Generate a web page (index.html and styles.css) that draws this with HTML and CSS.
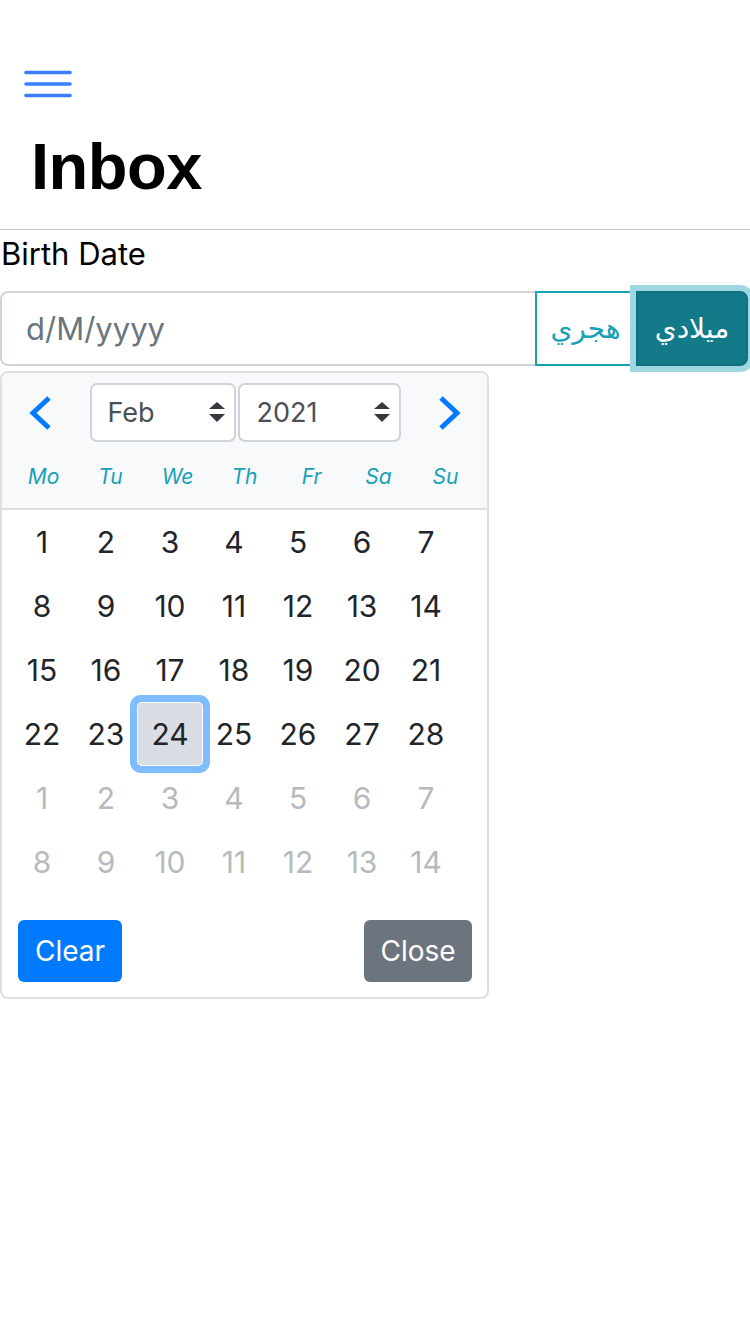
FILE: index.html
```html
<!DOCTYPE html>
<html>
<head>
<meta charset="utf-8">
<link rel="stylesheet" href="styles.css">
</head>
<body>
<div class="toolbar">
  <svg class="menu" width="50" height="30" viewBox="0 0 50 30">
    <line x1="2" y1="3.5" x2="46" y2="3.5" />
    <line x1="2" y1="15" x2="46" y2="15" />
    <line x1="2" y1="26.5" x2="46" y2="26.5" />
  </svg>
</div>
<div class="titlebar"><h1 class="title">Inbox</h1></div>
<div class="content">
  <label class="label">Birth Date</label>
  <div class="input-group">
    <div class="input"><span class="placeholder">d/M/yyyy</span></div>
    <div class="btn-hijri" dir="rtl">هجري</div>
    <div class="btn-miladi" dir="rtl">ميلادي</div>
  </div>
  <div class="picker">
    <div class="dp-header">
      <div class="nav">
        <div class="arrow left">
          <svg width="26" height="34" viewBox="0 0 26 34"><polyline points="22,2 6,17 22,32" /></svg>
        </div>
        <div class="select month"><span>Feb</span>
          <svg width="16" height="22" viewBox="0 0 16 22"><polygon points="8,0 16,7 0,7" /><polygon points="0,12 16,12 8,20" /></svg>
        </div>
        <div class="select year"><span>2021</span>
          <svg width="16" height="22" viewBox="0 0 16 22"><polygon points="8,0 16,7 0,7" /><polygon points="0,12 16,12 8,20" /></svg>
        </div>
        <div class="arrow right">
          <svg width="26" height="34" viewBox="0 0 26 34"><polyline points="4,2 20,17 4,32" /></svg>
        </div>
      </div>
      <div class="weekdays">
        <div>Mo</div><div>Tu</div><div>We</div><div>Th</div><div>Fr</div><div>Sa</div><div>Su</div>
      </div>
    </div>
    <div class="days">
      <div class="week"><div class="day">1</div><div class="day">2</div><div class="day">3</div><div class="day">4</div><div class="day">5</div><div class="day">6</div><div class="day">7</div></div>
      <div class="week"><div class="day">8</div><div class="day">9</div><div class="day">10</div><div class="day">11</div><div class="day">12</div><div class="day">13</div><div class="day">14</div></div>
      <div class="week"><div class="day">15</div><div class="day">16</div><div class="day">17</div><div class="day">18</div><div class="day">19</div><div class="day">20</div><div class="day">21</div></div>
      <div class="week"><div class="day">22</div><div class="day">23</div><div class="day selected">24</div><div class="day">25</div><div class="day">26</div><div class="day">27</div><div class="day">28</div></div>
      <div class="week muted"><div class="day">1</div><div class="day">2</div><div class="day">3</div><div class="day">4</div><div class="day">5</div><div class="day">6</div><div class="day">7</div></div>
      <div class="week muted"><div class="day">8</div><div class="day">9</div><div class="day">10</div><div class="day">11</div><div class="day">12</div><div class="day">13</div><div class="day">14</div></div>
    </div>
    <div class="footer">
      <div class="btn btn-primary">Clear</div>
      <div class="btn btn-secondary">Close</div>
    </div>
  </div>
</div>
</body>
</html>
```

FILE: styles.css
```css
html, body {
  margin: 0;
  padding: 0;
  background: #fff;
}
body {
  font-family: Inter, "Liberation Sans", sans-serif;
  color: #212529;
  width: 750px;
  overflow: hidden;
}
.toolbar {
  height: 88px;
  padding-top: 40px;
  display: flex;
  align-items: center;
  padding-left: 24px;
}
.menu line {
  stroke: #3880ff;
  stroke-width: 3.6;
  stroke-linecap: round;
}
.titlebar {
  border-bottom: 1px solid #c8c7cc;
  box-sizing: border-box;
  height: 102px;
}
.title {
  margin: 0;
  padding: 5px 0 0 31px;
  font-family: "Liberation Sans", Arial, sans-serif;
  font-weight: 700;
  font-size: 65px;
  line-height: 68px;
  letter-spacing: -0.5px;
  color: #000;
}
.content {
  padding: 0 2px 0 0;
}
.label {
  display: block;
  font-size: 31px;
  line-height: 48px;
  margin-bottom: 13px;
  padding-left: 1px;
  color: #000;
}
.input-group {
  display: flex;
  height: 75px;
}
.input {
  flex: 1;
  border: 2px solid #ced4da;
  border-right: none;
  border-radius: 8px 0 0 8px;
  display: flex;
  align-items: center;
  padding-left: 24px;
}
.placeholder {
  font-size: 31px;
  color: #6c757d;
}
.btn-hijri, .btn-miladi {
  font-family: "DejaVu Sans", sans-serif;
  font-size: 28px;
  display: flex;
  align-items: center;
  justify-content: center;
  box-sizing: border-box;
}
.btn-hijri {
  width: 101px;
  border: 2px solid #17a2b8;
  color: #17a2b8;
  background: #fff;
}
.btn-miladi {
  width: 112px;
  background: #127a88;
  border: 2px solid #10707f;
  color: #fff;
  border-radius: 0 8px 8px 0;
  box-shadow: 0 0 0 6px #9fd8e0;
  position: relative;
}
.picker {
  margin-top: 5px;
  width: 489px;
  box-sizing: border-box;
  border: 2px solid #dfdfdf;
  border-radius: 8px;
}
.dp-header {
  background: #f8f9fa;
  border-bottom: 2px solid #dfdfdf;
  border-radius: 6px 6px 0 0;
  padding-top: 10px;
}
.nav {
  display: flex;
  height: 59px;
  align-items: center;
}
.arrow {
  flex: 1;
  display: flex;
  align-items: center;
  height: 59px;
}
.arrow.left { padding-left: 25px; }
.arrow.right { justify-content: flex-end; padding-right: 24px; }
.arrow polyline {
  fill: none;
  stroke: #007bff;
  stroke-width: 5;
  stroke-linecap: butt;
  stroke-linejoin: miter;
}
.select {
  height: 59px;
  box-sizing: border-box;
  border: 2px solid #ced4da;
  border-radius: 7px;
  background: #fff;
  display: flex;
  align-items: center;
  justify-content: space-between;
  padding: 0 9px 0 16px;
  font-size: 27px;
  color: #495057;
}
.select svg polygon { fill: #343a40; }
.select svg { margin-top: 1px; }
.month { width: 146px; }
.year { width: 163px; margin-left: 2px; padding-left: 17px; }
.weekdays {
  display: flex;
  height: 64px;
  margin-top: 2px;
  padding: 0 8px;
}
.weekdays div {
  flex: 1;
  display: flex;
  align-items: center;
  justify-content: center;
  font-style: italic;
  font-size: 21px;
  color: #17a2b8;
}
.days {
  padding: 0 8px;
}
.week {
  display: flex;
}
.day {
  width: 64px;
  height: 64px;
  display: flex;
  align-items: center;
  justify-content: center;
  font-size: 30px;
  color: #212529;
}
.week.muted .day {
  color: #b6babe;
}
.day.selected {
  background: #dadde3;
  border-radius: 4px;
  box-shadow: 0 0 0 1px #fff, 0 0 0 8px #80bdff;
  height: 62px;
  margin-top: 1px;
}
.footer {
  display: flex;
  justify-content: space-between;
  padding: 26px 15px 15px 16px;
}
.btn {
  height: 62px;
  box-sizing: border-box;
  display: flex;
  align-items: center;
  justify-content: center;
  font-size: 28px;
  color: #fff;
  border-radius: 6px;
}
.btn-primary { background: #007bff; width: 104px; }
.btn-secondary { background: #6c757d; width: 108px; }
```
